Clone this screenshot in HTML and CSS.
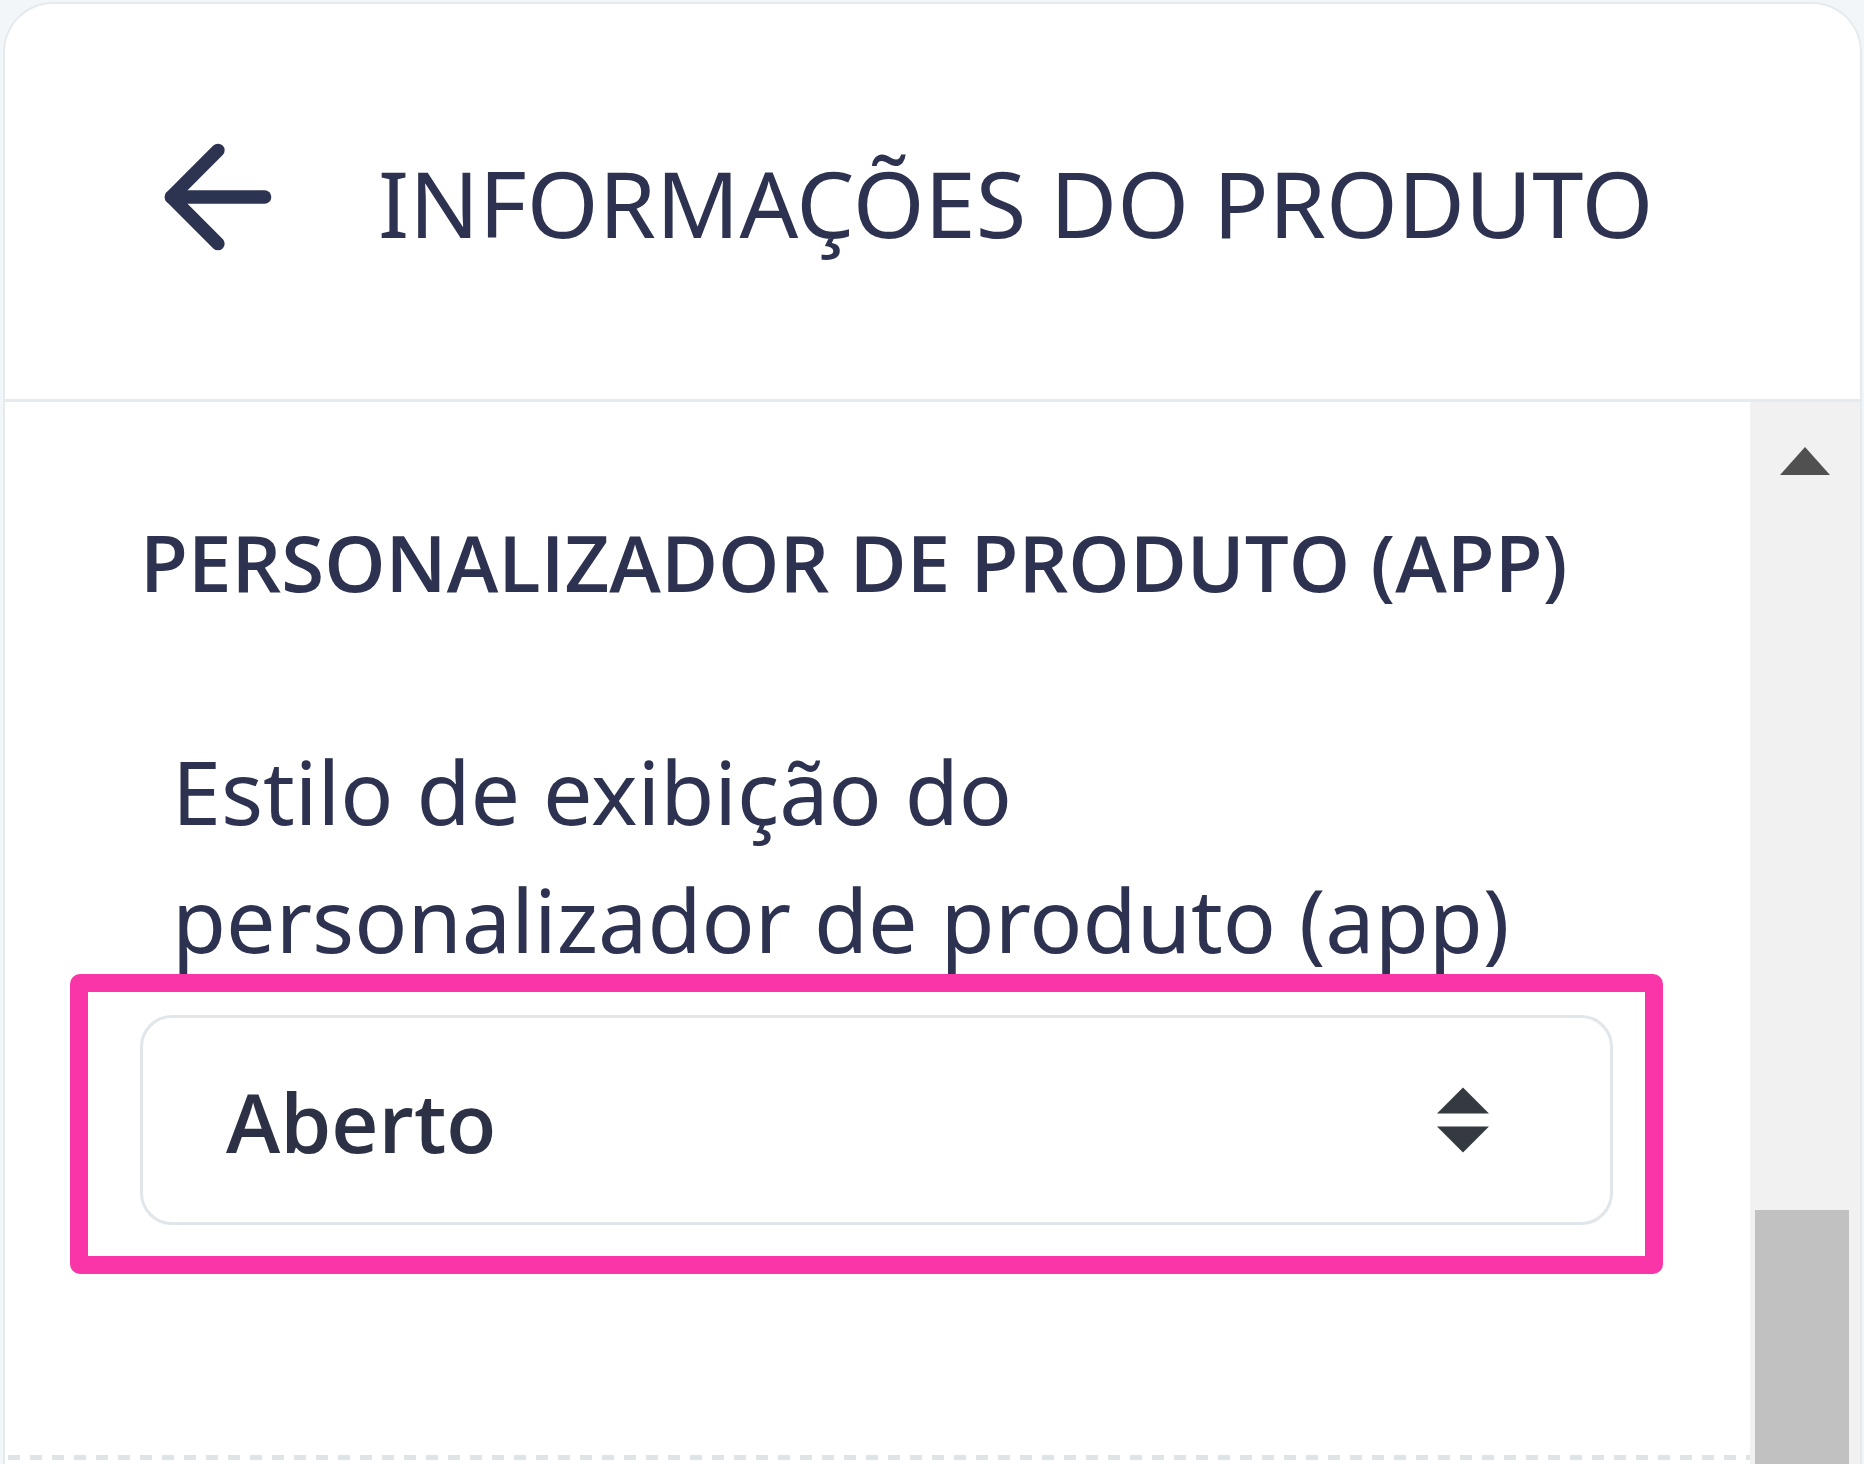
FILE: index.html
```html
<!DOCTYPE html>
<html lang="pt-BR">
<head>
<meta charset="utf-8">
<title>Informações do produto</title>
<link rel="stylesheet" href="styles.css">
</head>
<body>
<div class="panel">
  <header class="panel-header">
    <svg class="back-icon" viewBox="0 0 24 24" fill="none" stroke="currentColor" stroke-width="2" stroke-linecap="round" stroke-linejoin="round" aria-hidden="true">
      <line x1="19" y1="12" x2="5" y2="12"></line>
      <polyline points="12 19 5 12 12 5"></polyline>
    </svg>
    <h1 class="panel-title">INFORMAÇÕES DO PRODUTO</h1>
  </header>
  <div class="panel-body">
    <div class="panel-content">
      <h2 class="section-title">PERSONALIZADOR DE PRODUTO (APP)</h2>
      <label class="field-label">Estilo de exibição do personalizador de produto (app)</label>
      <div class="highlight">
        <div class="select">
          <span class="select-value">Aberto</span>
          <svg class="select-arrows" viewBox="0 0 4 5" aria-hidden="true"><path d="M2 0L0 2h4zm0 5L0 3h4z"></path></svg>
        </div>
      </div>
      <div class="dashed"></div>
    </div>
    <div class="scrollbar">
      <div class="scroll-up"></div>
      <div class="scroll-space"></div>
      <div class="scroll-thumb"></div>
    </div>
  </div>
</div>
</body>
</html>
```
FILE: styles.css
```css
html, body {
  margin: 0;
  padding: 0;
  height: 100%;
  overflow: hidden;
}

body {
  background: #f3f6f9;
  font-family: "Noto Sans", "Open Sans", sans-serif;
  color: #2d3250;
}

.panel {
  margin: 2px 0 0 3px;
  width: 1859px;
  height: 1462px;
  box-sizing: border-box;
  border: 2px solid #e5eaee;
  border-bottom: none;
  border-radius: 50px 50px 0 0;
  background: #ffffff;
  display: flex;
  flex-direction: column;
  overflow: hidden;
}

.panel-header {
  height: 398px;
  box-sizing: border-box;
  flex: none;
  display: flex;
  align-items: flex-start;
  border-bottom: 3px solid #e5eaee;
}

.back-icon {
  width: 160px;
  height: 160px;
  margin: 113px 0 0 133px;
  color: #2d3452;
  flex: none;
}

.panel-title {
  margin: 144px 0 0 80px;
  font-size: 92px;
  line-height: 110px;
  font-weight: 400;
  letter-spacing: 0;
  white-space: nowrap;
}

.panel-body {
  flex: 1;
  display: flex;
  min-height: 0;
}

.panel-content {
  flex: 1;
  min-width: 0;
  display: flex;
  flex-direction: column;
  align-items: flex-start;
}

.section-title {
  margin: 112px 0 0 135px;
  font-family: "Open Sans", "Noto Sans", sans-serif;
  font-size: 78px;
  line-height: 96px;
  font-weight: 600;
  white-space: nowrap;
}

.field-label {
  display: block;
  margin: 117px 0 -9px 167px;
  width: 1400px;
  font-size: 88px;
  line-height: 128px;
  font-weight: 400;
}

.highlight {
  align-self: stretch;
  margin: 0 87px 0 65px;
  border: 18px solid #f935a7;
  border-radius: 10px;
  padding: 23px 32px 31px 52px;
}

.select {
  height: 210px;
  box-sizing: border-box;
  border: 3px solid #e1e6eb;
  border-radius: 32px;
  display: flex;
  align-items: center;
  justify-content: space-between;
  padding: 0 121px 0 83px;
}

.select-value {
  font-family: "Open Sans", "Noto Sans", sans-serif;
  font-size: 82px;
  line-height: 82px;
  font-weight: 600;
  color: #2c3145;
  margin-top: 1px;
}

.select-arrows {
  width: 52px;
  height: 66px;
  fill: #343a40;
}

.dashed {
  align-self: stretch;
  margin: 181px 0 0 3px;
  height: 5px;
  flex: none;
  background: repeating-linear-gradient(90deg, #dfe4e9 0 12px, transparent 12px 22px);
}

.scrollbar {
  width: 110px;
  flex: none;
  background: #f1f1f1;
  display: flex;
  flex-direction: column;
  align-items: center;
}

.scroll-up {
  margin-top: 45px;
  width: 0;
  height: 0;
  border-left: 25px solid transparent;
  border-right: 25px solid transparent;
  border-bottom: 28px solid #505050;
}

.scroll-space {
  height: 735px;
  flex: none;
}

.scroll-thumb {
  width: 94px;
  flex: 1;
  background: #c1c1c1;
  margin-left: -7px;
}
```
